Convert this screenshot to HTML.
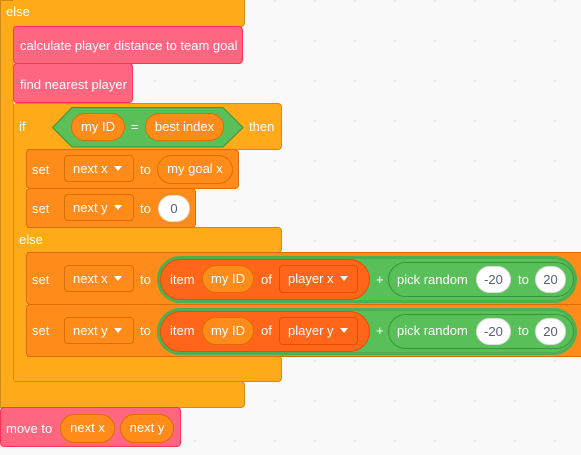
<!DOCTYPE html>
<html><head><meta charset="utf-8"><style>
body{margin:0;width:581px;height:455px;overflow:hidden;background:#f9f9f9;
background-image:radial-gradient(circle,#e4e4e4 1px,transparent 1.2px);background-size:40px 40px;background-position:15px 21px;
font-family:"Liberation Sans",sans-serif;font-size:13px;color:#fff;position:relative}
div{position:absolute;box-sizing:border-box}
.c{background:#FFAB19;border:1px solid #CF8B17;border-radius:4px}
.p{background:#FF6680;border:1px solid #FF3355;border-radius:4px}
.v{background:#FF8C1A;border:1px solid #DB6E00;border-radius:4px}
.t{position:absolute;line-height:16px;white-space:nowrap}
.pill{background:#FF8C1A;border:1px solid #DB6E00;border-radius:16px;text-align:center;line-height:26px}
.dd{background:#FF8C1A;border:1px solid #DB6E00;border-radius:4px;line-height:25px;padding-left:8px}
.tri{display:inline-block;width:0;height:0;border-left:4px solid transparent;border-right:4px solid transparent;border-top:5px solid #fff;margin-left:6px;vertical-align:2px}
.w{background:#fff;color:#575e75;border-radius:16px;text-align:center;line-height:26px;border:1px solid #ddd}
.g{background:#59C059;border:1px solid #389438;border-radius:24px}
</style></head><body>
<!-- outer if-else -->
<div class="c" style="left:0;top:-4px;width:245px;height:31px"></div>
<div class="c" style="left:0;top:0;width:13px;height:408px;border-right:none;border-radius:0"></div>
<div class="c" style="left:0;top:381px;width:245px;height:27px"></div>
<div style="left:1px;top:1px;width:13px;height:406px;background:#FFAB19"></div>
<span class="t" style="left:6px;top:4px">else</span>
<!-- pink -->
<div class="p" style="left:13px;top:26px;width:230px;height:38px"></div>
<span class="t" style="left:20px;top:38px">calculate player distance to team goal</span>
<div class="p" style="left:13px;top:63px;width:120px;height:40px"></div>
<span class="t" style="left:20px;top:77px">find nearest player</span>
<!-- inner if -->
<div class="c" style="left:13px;top:103px;width:269px;height:47px"></div>
<div class="c" style="left:13px;top:227px;width:269px;height:26px"></div>
<div class="c" style="left:13px;top:356px;width:269px;height:26px"></div>
<div class="c" style="left:13px;top:104px;width:14px;height:276px;border-top:none;border-bottom:none;border-right:none;border-radius:0"></div>
<div style="left:14px;top:104px;width:13px;height:277px;background:#FFAB19"></div>
<span class="t" style="left:19px;top:119px">if</span>
<span class="t" style="left:19px;top:232px">else</span>
<svg style="position:absolute;left:52px;top:107px" width="192" height="41"><polygon points="20,0.5 171,0.5 191,20.5 171,40 20,40 0.5,20.5" fill="#59C059" stroke="#389438"/></svg>
<div class="pill" style="left:71px;top:113px;width:54px;height:28px">my ID</div>
<span class="t" style="left:131px;top:119px">=</span>
<div class="pill" style="left:145px;top:113px;width:79px;height:28px">best index</div>
<span class="t" style="left:249px;top:119px">then</span>
<!-- set next x -->
<div class="v" style="left:26px;top:149px;width:213px;height:40px"></div>
<span class="t" style="left:32px;top:162px">set</span>
<div class="dd" style="left:64px;top:155px;width:70px;height:27px">next x<span class="tri"></span></div>
<span class="t" style="left:140px;top:162px">to</span>
<div class="pill" style="left:157px;top:155px;width:76px;height:29px">my goal x</div>
<div class="v" style="left:26px;top:188px;width:170px;height:40px"></div>
<span class="t" style="left:32px;top:201px">set</span>
<div class="dd" style="left:64px;top:194px;width:70px;height:27px">next y<span class="tri"></span></div>
<span class="t" style="left:140px;top:201px">to</span>
<div class="w" style="left:158px;top:195px;width:32px;height:27px">0</div>
<!-- big sets -->
<div class="v" style="left:26px;top:252px;width:560px;height:53px"></div>
<div class="v" style="left:26px;top:304px;width:560px;height:53px"></div>
<!-- row 1 -->
<span class="t" style="left:32px;top:272px">set</span>
<div class="dd" style="left:64px;top:265px;width:70px;height:27px">next x<span class="tri"></span></div>
<span class="t" style="left:140px;top:272px">to</span>
<div class="g" style="left:157px;top:256px;width:420px;height:47px;border:3px solid #4CAF50"></div>
<div style="left:160px;top:259px;width:210px;height:41px;background:#FF661A;border:1px solid #E64D00;border-radius:21px"></div>
<span class="t" style="left:170px;top:272px">item</span>
<div class="pill" style="left:202px;top:265px;width:52px;height:28px">my ID</div>
<span class="t" style="left:261px;top:272px">of</span>
<div class="dd" style="left:279px;top:265px;width:79px;height:28px;background:#FF661A;border-color:#E64D00">player x<span class="tri"></span></div>
<span class="t" style="left:376px;top:272px">+</span>
<div class="g" style="left:388px;top:262px;width:186px;height:35px"></div>
<span class="t" style="left:397px;top:272px">pick random</span>
<div class="w" style="left:476px;top:266px;width:35px;height:27px">-20</div>
<span class="t" style="left:518px;top:272px">to</span>
<div class="w" style="left:535px;top:266px;width:31px;height:27px">20</div>
<!-- row 2 -->
<span class="t" style="left:32px;top:323px">set</span>
<div class="dd" style="left:64px;top:317px;width:70px;height:27px">next y<span class="tri"></span></div>
<span class="t" style="left:140px;top:323px">to</span>
<div class="g" style="left:157px;top:308px;width:420px;height:47px;border:3px solid #4CAF50"></div>
<div style="left:160px;top:311px;width:210px;height:41px;background:#FF661A;border:1px solid #E64D00;border-radius:21px"></div>
<span class="t" style="left:170px;top:323px">item</span>
<div class="pill" style="left:202px;top:317px;width:52px;height:28px">my ID</div>
<span class="t" style="left:261px;top:323px">of</span>
<div class="dd" style="left:279px;top:317px;width:79px;height:28px;background:#FF661A;border-color:#E64D00">player y<span class="tri"></span></div>
<span class="t" style="left:376px;top:323px">+</span>
<div class="g" style="left:388px;top:314px;width:186px;height:35px"></div>
<span class="t" style="left:397px;top:323px">pick random</span>
<div class="w" style="left:476px;top:318px;width:35px;height:27px">-20</div>
<span class="t" style="left:518px;top:323px">to</span>
<div class="w" style="left:535px;top:318px;width:31px;height:27px">20</div>
<!-- move to -->
<div class="p" style="left:0;top:407px;width:181px;height:40px"></div>
<span class="t" style="left:6px;top:421px">move to</span>
<div class="pill" style="left:60px;top:414px;width:55px;height:29px">next x</div>
<div class="pill" style="left:120px;top:414px;width:54px;height:29px">next y</div>
</body></html>
